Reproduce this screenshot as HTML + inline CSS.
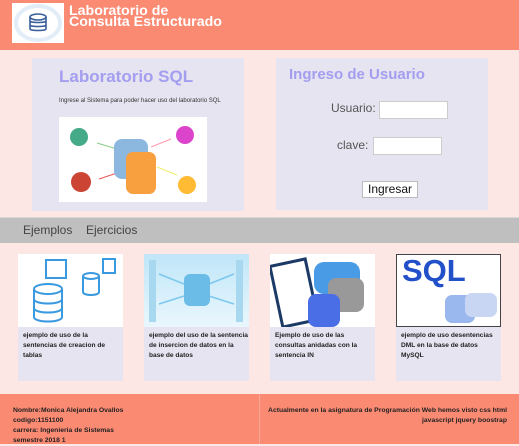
<!DOCTYPE html>
<html><head><meta charset="utf-8"><style>
*{margin:0;padding:0;box-sizing:border-box}
body{width:519px;height:444px;overflow:hidden;background:#fde7e5;font-family:"Liberation Sans",sans-serif;position:relative}
.a{position:absolute}
.hdr{left:0;top:0;width:519px;height:50px;background:#fb8a73}
.logo{left:12px;top:3px;width:52px;height:40px;background:#fff}
.ttl{left:69px;top:6px;color:#fff;font-size:14.2px;font-weight:bold;line-height:11px}
.panel{background:#e6e4f0}
.nav{left:0;top:217px;width:519px;height:26px;background:#bfbfbf;border-top:1px solid #d8d8d8}
.nav span{position:absolute;top:5px;font-size:12px;color:#444}
.card{background:#e6e4f0;width:105px;height:127px;top:254px}
.card .im{width:105px;height:73px;background:#fff;position:relative}
.card p{font-size:6.6px;font-weight:bold;color:#222;line-height:10px;padding:4px 0 0 5px;white-space:nowrap}
.ftr{left:0;top:394px;width:519px;height:50px;background:#fb8a73;font-size:6.8px;font-weight:bold;color:#222;line-height:10px}
input{position:absolute;background:#fff;border:1px solid #ccc;height:18px}
</style></head><body>
<div class="a hdr"></div>
<div class="a logo"><svg width="52" height="40"><ellipse cx="26" cy="20" rx="22" ry="17" fill="none" stroke="#e3edf8" stroke-width="4"/><g fill="none" stroke="#3a5f9a" stroke-width="1.6"><ellipse cx="26" cy="14" rx="8" ry="3"/><path d="M18 14v12c0 2 16 2 16 0V14M18 18c0 2 16 2 16 0M18 22c0 2 16 2 16 0"/></g></svg></div>
<div class="a ttl">Laboratorio de<br>Consulta Estructurado</div>

<div class="a panel" style="left:32px;top:58px;width:212px;height:153px"></div>
<div class="a" style="left:59px;top:67px;font-size:17px;font-weight:bold;color:#a49ef0">Laboratorio SQL</div>
<div class="a" style="left:59px;top:98px;font-size:6px;color:#333">Ingrese al Sistema para poder hacer uso del laboratorio SQL</div>
<div class="a" style="left:59px;top:117px;width:148px;height:85px;background:#fff">
<svg width="148" height="85"><line x1="38" y1="26" x2="58" y2="32" stroke="#8c8" stroke-width="1"/><line x1="40" y1="62" x2="58" y2="56" stroke="#e55" stroke-width="1"/><line x1="92" y1="30" x2="112" y2="22" stroke="#f9a" stroke-width="1"/><line x1="98" y1="50" x2="118" y2="58" stroke="#ee6" stroke-width="1"/>
<rect x="55" y="22" width="34" height="40" rx="8" fill="#8cb8e0"/><rect x="67" y="35" width="30" height="42" rx="7" fill="#f8a040"/>
<circle cx="20" cy="20" r="9" fill="#4a8"/><circle cx="126" cy="18" r="9" fill="#d4c"/><circle cx="22" cy="65" r="10" fill="#c43"/><circle cx="128" cy="68" r="9" fill="#fb3"/></svg></div>

<div class="a panel" style="left:276px;top:58px;width:212px;height:152px"></div>
<div class="a" style="left:289px;top:66px;font-size:15px;font-weight:bold;color:#a49ef0">Ingreso de Usuario</div>
<div class="a" style="left:331px;top:101px;font-size:12px;color:#555">Usuario:</div>
<input style="left:379px;top:101px;width:69px">
<div class="a" style="left:337px;top:138px;font-size:12px;color:#555">clave:</div>
<input style="left:373px;top:137px;width:69px">
<div class="a" style="left:362px;top:181px;width:56px;height:17px;background:#fff;border:1px solid #bbb;font-size:12px;text-align:center;line-height:15px;color:#111">Ingresar</div>

<div class="a nav"><span style="left:23px">Ejemplos</span><span style="left:86px">Ejercicios</span></div>

<div class="a card" style="left:18px"><div class="im"><svg width="105" height="73"><g fill="none" stroke="#3a9ae0" stroke-width="2"><ellipse cx="30" cy="35" rx="14" ry="5"/><path d="M16 35v28c0 6 28 6 28 0V35M16 45c0 6 28 6 28 0M16 54c0 6 28 6 28 0"/><ellipse cx="73" cy="22" rx="8" ry="3"/><path d="M65 22v16c0 4 16 4 16 0V22"/><rect x="28" y="6" width="20" height="18"/><rect x="85" y="5" width="12" height="14"/></g></svg></div><p>ejemplo de uso de la<br>sentencias de creacion de<br>tablas</p></div>
<div class="a card" style="left:144px"><div class="im" style="background:linear-gradient(#bfe6f8,#eaf7fd)"><svg width="105" height="73"><g stroke="#7cc8ee" stroke-width="1.5"><line x1="15" y1="20" x2="40" y2="30"/><line x1="15" y1="50" x2="40" y2="42"/><line x1="90" y1="20" x2="65" y2="30"/><line x1="90" y1="50" x2="65" y2="42"/></g><rect x="40" y="20" width="26" height="32" rx="6" fill="#6bbde8"/><rect x="5" y="6" width="7" height="62" fill="#a8d8f0"/><rect x="92" y="6" width="7" height="62" fill="#a8d8f0"/></svg></div><p>ejemplo del uso de la sentencia<br>de insercion de datos en la<br>base de datos</p></div>
<div class="a card" style="left:270px"><div class="im"><svg width="105" height="73"><rect x="6" y="8" width="36" height="62" fill="#fff" stroke="#1c3a66" stroke-width="3" transform="rotate(-12 24 39)"/><rect x="44" y="8" width="46" height="32" rx="10" fill="#4a9be6"/><rect x="58" y="24" width="36" height="34" rx="8" fill="#999"/><rect x="38" y="40" width="32" height="33" rx="8" fill="#4a6ee6"/></svg></div><p>Ejemplo de uso de las<br>consultas anidadas con la<br>sentencia IN</p></div>
<div class="a card" style="left:396px"><div class="im" style="border:1px solid #444"><div style="position:absolute;left:5px;top:-2px;font-size:31px;font-weight:bold;color:#2250c8">SQL</div><svg width="105" height="73" style="position:absolute;left:0;top:0"><rect x="48" y="40" width="30" height="28" rx="7" fill="#9ab8ee"/><rect x="68" y="38" width="32" height="24" rx="7" fill="#c8d6f3"/></svg></div><p>ejemplo de uso desentencias<br>DML en la base de datos<br>MySQL</p></div>

<div class="a ftr"><div class="a" style="left:259px;top:0;width:1px;height:50px;background:#fca898"></div>
<div class="a" style="left:13px;top:12px">Nombre:Monica Alejandra Ovallos<br>codigo:1151100<br>carrera: Ingenieria de Sistemas<br>semestre 2018 1</div>
<div class="a" style="right:12px;top:12px;text-align:right;width:240px">Actualmente en la asignatura de Programación Web hemos visto css html<br>javascript jquery boostrap</div></div>
</body></html>
